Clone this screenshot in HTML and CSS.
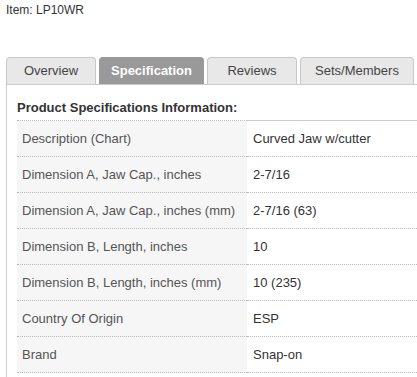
FILE: index.html
```html
<!DOCTYPE html>
<html lang="en">

<head>
    <meta charset="UTF-8">
    <meta name="viewport" content="width=device-width, initial-scale=1.0">
    <title>Item LP10WR - Specification</title>
    <link rel="stylesheet" href="styles.css">
</head>

<body>

    <div class="page">
        <div class="item-number">Item: LP10WR</div>

        <ul class="tabs">
            <li class="tab tab-overview">Overview</li>
            <li class="tab tab-spec active">Specification</li>
            <li class="tab tab-reviews">Reviews</li>
            <li class="tab tab-sets">Sets/Members</li>
        </ul>

        <div class="tab-panel">
            <h3 class="spec-title">Product Specifications Information:</h3>
            <table class="spec-table">
                <tr>
                    <td class="spec-name">Description (Chart)</td>
                    <td class="spec-value">Curved Jaw w/cutter</td>
                </tr>
                <tr>
                    <td class="spec-name">Dimension A, Jaw Cap., inches</td>
                    <td class="spec-value">2-7/16</td>
                </tr>
                <tr>
                    <td class="spec-name">Dimension A, Jaw Cap., inches (mm)</td>
                    <td class="spec-value">2-7/16 (63)</td>
                </tr>
                <tr>
                    <td class="spec-name">Dimension B, Length, inches</td>
                    <td class="spec-value">10</td>
                </tr>
                <tr>
                    <td class="spec-name">Dimension B, Length, inches (mm)</td>
                    <td class="spec-value">10 (235)</td>
                </tr>
                <tr>
                    <td class="spec-name">Country Of Origin</td>
                    <td class="spec-value">ESP</td>
                </tr>
                <tr>
                    <td class="spec-name">Brand</td>
                    <td class="spec-value">Snap-on</td>
                </tr>
            </table>
        </div>
    </div>

</body>

</html>
```

FILE: styles.css
```css
body {
    font-family: "Liberation Sans", Arial, sans-serif;
    margin: 0;
    padding: 0;
    background-color: #fff;
    color: #333;
    overflow: hidden;
}

.page {
    padding-left: 6px;
}

.item-number {
    font-size: 12px;
    line-height: 15px;
    padding-top: 3px;
    color: #333;
}

.tabs {
    display: flex;
    gap: 3px;
    list-style: none;
    margin: 39px 0 0 0;
    padding: 0;
    border-bottom: 1px solid #ccc;
}

.tab {
    box-sizing: border-box;
    height: 27px;
    line-height: 25px;
    text-align: center;
    font-size: 13px;
    color: #444;
    background-color: #e8e8e8;
    border: 1px solid #c8c8c8;
    border-bottom: none;
    border-radius: 4px 4px 0 0;
    cursor: pointer;
}

.tab.active {
    background-color: #999;
    border-color: #999;
    color: #fff;
    font-weight: bold;
}

.tab-overview {
    width: 90px;
}

.tab-spec {
    width: 105px;
}

.tab-reviews {
    width: 90px;
}

.tab-sets {
    width: 114px;
}

.tab-panel {
    border-left: 1px solid #ccc;
    padding: 15px 0 4px 10px;
}

.spec-title {
    font-size: 13px;
    line-height: 16px;
    font-weight: bold;
    color: #333;
    margin: 0 0 4px 0;
}

.spec-table {
    width: 100%;
    border-collapse: collapse;
    font-size: 13px;
}

.spec-table td {
    height: 35px;
    padding: 0;
    border-bottom: 1px dotted #bbb;
    vertical-align: middle;
}

.spec-table tr:first-child td {
    border-top: 1px dotted #bbb;
}

.spec-table tr:first-child .spec-value {
    border-top: 1px solid #ccc;
}

.spec-name {
    width: 225px;
    padding-left: 5px !important;
    background-color: #f6f6f6;
    color: #555;
}

.spec-value {
    padding-left: 6px !important;
    color: #333;
}
```
